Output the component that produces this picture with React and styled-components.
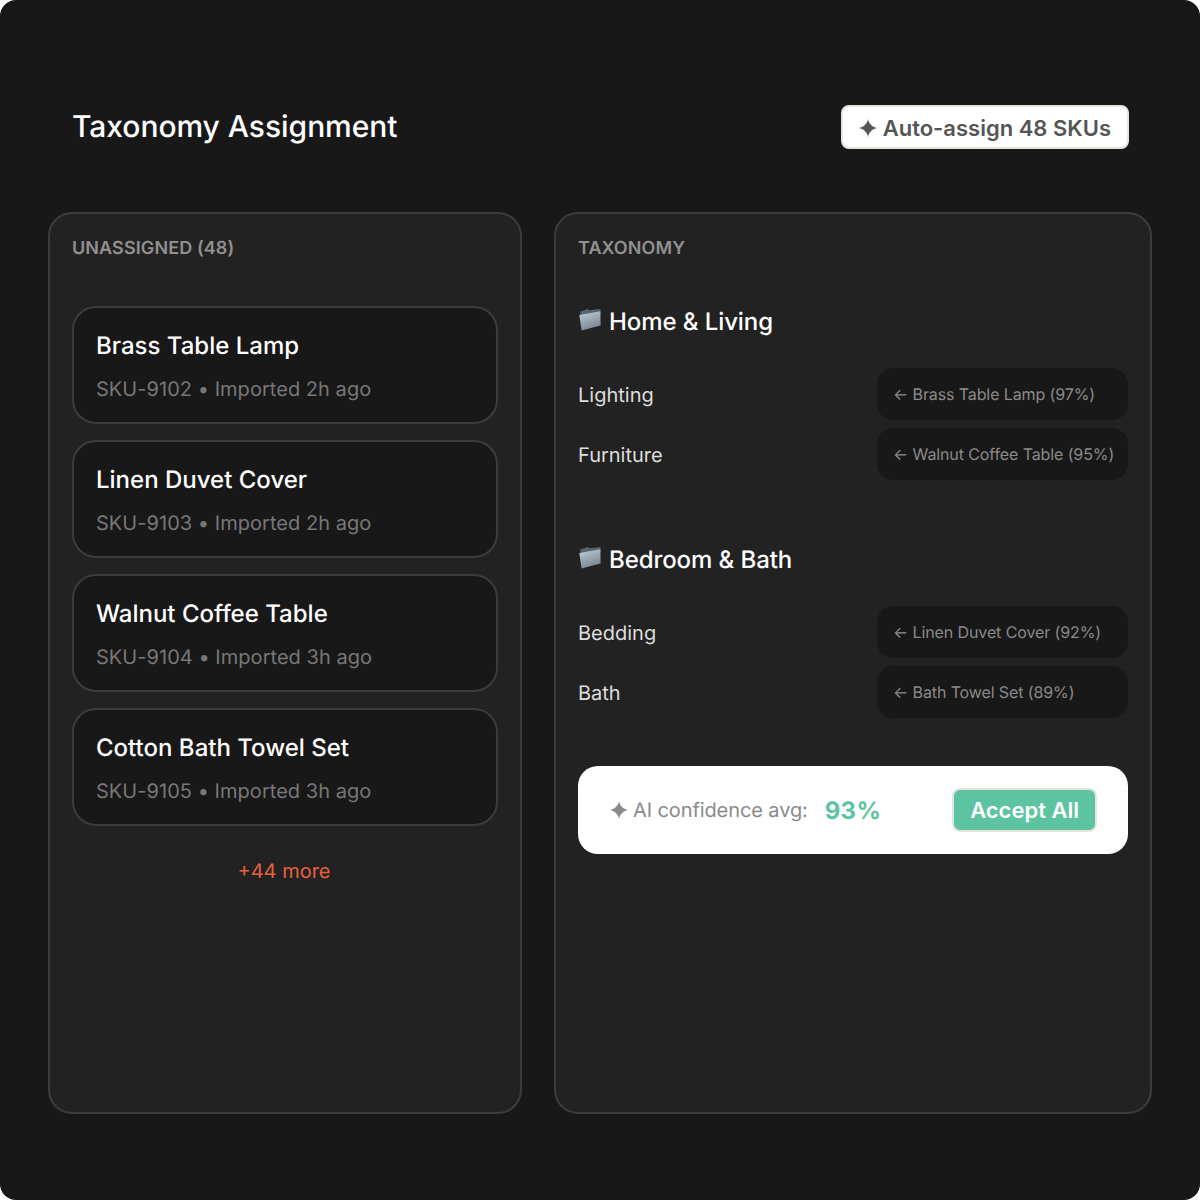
import styled, { createGlobalStyle } from 'styled-components';

const unassigned = [
  { name: 'Brass Table Lamp', meta: 'SKU-9102 • Imported 2h ago' },
  { name: 'Linen Duvet Cover', meta: 'SKU-9103 • Imported 2h ago' },
  { name: 'Walnut Coffee Table', meta: 'SKU-9104 • Imported 3h ago' },
  { name: 'Cotton Bath Towel Set', meta: 'SKU-9105 • Imported 3h ago' },
];

const groups = [
  {
    title: 'Home & Living',
    rows: [
      { label: 'Lighting', match: '← Brass Table Lamp (97%)' },
      { label: 'Furniture', match: '← Walnut Coffee Table (95%)' },
    ],
  },
  {
    title: 'Bedroom & Bath',
    rows: [
      { label: 'Bedding', match: '← Linen Duvet Cover (92%)' },
      { label: 'Bath', match: '← Bath Towel Set (89%)' },
    ],
  },
];

const FolderIcon = ({ id }) => (
  <svg width="24" height="24" viewBox="0 0 24 24" aria-hidden="true">
    <defs>
      <linearGradient id={id} x1="0" y1="0" x2="0.4" y2="1">
        <stop offset="0" stopColor="#c3ced8" />
        <stop offset="1" stopColor="#7a8894" />
      </linearGradient>
    </defs>
    <path d="M2 3.6 L10 1 L11 2.2 L22.4 1 L22.6 6 L3 9 Z" fill="#59636c" />
    <path d="M1.3 6.9 L22.4 3.3 L22.6 17.6 L3.6 22.4 Z" fill={`url(#${id})`} />
  </svg>
);

const Sparkle = () => (
  <svg width="18" height="18" viewBox="0 0 18 18" aria-hidden="true">
    <path
      d="M9 0 C9.8 4.5 13 8 18 9 C13 10 9.8 13.5 9 18 C8.2 13.5 5 10 0 9 C5 8 8.2 4.5 9 0Z"
      fill="currentColor"
    />
  </svg>
);

const App = () => {
  return (
    <>
      <GlobalStyle />
      <Page>
        <Header>
          <Title>Taxonomy Assignment</Title>
          <AutoButton>
            <Sparkle />
            Auto-assign 48 SKUs
          </AutoButton>
        </Header>
        <Columns>
          <Panel>
            <PanelLabel>Unassigned (48)</PanelLabel>
            <CardList>
              {unassigned.map((item) => (
                <Card key={item.name}>
                  <CardName>{item.name}</CardName>
                  <CardMeta>{item.meta}</CardMeta>
                </Card>
              ))}
            </CardList>
            <More>+44 more</More>
          </Panel>
          <Panel>
            <PanelLabel>Taxonomy</PanelLabel>
            {groups.map((group, index) => (
              <Group key={group.title}>
                <GroupTitle>
                  <FolderIcon id={`folder-${index}`} />
                  {group.title}
                </GroupTitle>
                <Rows>
                  {group.rows.map((row) => (
                    <Row key={row.label}>
                      <RowLabel>{row.label}</RowLabel>
                      <Match>{row.match}</Match>
                    </Row>
                  ))}
                </Rows>
              </Group>
            ))}
            <Summary>
              <SummaryText>
                <Sparkle />
                AI confidence avg:
              </SummaryText>
              <Score>93%</Score>
              <AcceptButton>Accept All</AcceptButton>
            </Summary>
          </Panel>
        </Columns>
      </Page>
    </>
  );
};

const GlobalStyle = createGlobalStyle`
  html, body {
    margin: 0;
    background: #ffffff;
  }

  * {
    box-sizing: border-box;
  }
`;

const Page = styled.div`
  width: 1200px;
  height: 1200px;
  padding: 0 48px;
  background: #191818;
  border-radius: 16px;
  font-family: Inter, 'Liberation Sans', sans-serif;
  text-rendering: geometricPrecision;
  overflow: hidden;
`;

const Header = styled.header`
  height: 212px;
  padding: 42px 23px 0 24px;
  display: flex;
  align-items: center;
  justify-content: space-between;
`;

const Title = styled.h1`
  margin: 0;
  font-size: 30px;
  font-weight: 500;
  letter-spacing: -0.05px;
  color: #ffffff;
`;

const AutoButton = styled.button`
  height: 44px;
  padding: 1px 16px 0;
  display: inline-flex;
  align-items: center;
  gap: 6px;
  font-family: inherit;
  font-size: 22px;
  font-weight: 600;
  color: #555555;
  background: #ffffff;
  border: 2px solid #e8e4dc;
  border-radius: 8px;
`;

const Columns = styled.div`
  display: grid;
  grid-template-columns: 474px 598px;
  gap: 32px;
`;

const Panel = styled.section`
  height: 902px;
  padding: 22px;
  background: #232222;
  border: 2px solid #3d3c3c;
  border-radius: 24px;
`;

const PanelLabel = styled.h2`
  margin: 2px 0 -2px;
  font-size: 18px;
  line-height: 22px;
  font-weight: 600;
  letter-spacing: 0.1px;
  text-transform: uppercase;
  color: #909090;
`;

const CardList = styled.div`
  margin-top: 48px;
  display: flex;
  flex-direction: column;
  gap: 16px;
`;

const Card = styled.article`
  height: 118px;
  padding: 23px 22px;
  background: #191818;
  border: 2px solid #3d3c3c;
  border-radius: 24px;
`;

const CardName = styled.div`
  font-size: 24px;
  line-height: 30px;
  font-weight: 500;
  color: #ffffff;
`;

const CardMeta = styled.div`
  margin-top: 16px;
  font-size: 20px;
  line-height: 24px;
  letter-spacing: 0.04px;
  color: #777777;
`;

const More = styled.div`
  margin-top: 33px;
  padding-right: 2px;
  font-size: 20px;
  line-height: 24px;
  text-align: center;
  color: #e8603c;
`;

const Group = styled.div`
  margin-top: 49px;

  & + & {
    margin-top: 65px;
  }
`;

const GroupTitle = styled.h3`
  margin: 0;
  display: flex;
  align-items: center;
  gap: 7px;
  font-size: 24px;
  line-height: 30px;
  font-weight: 500;
  letter-spacing: -0.08px;
  color: #ffffff;

  svg {
    margin-top: -4px;
  }
`;

const Rows = styled.div`
  margin-top: 31px;
  display: flex;
  flex-direction: column;
  gap: 8px;
`;

const Row = styled.div`
  display: flex;
  align-items: center;
  justify-content: space-between;
`;

const RowLabel = styled.span`
  padding-top: 2px;
  font-size: 20px;
  color: #dddddd;
`;

const Match = styled.span`
  width: 251px;
  height: 52px;
  padding: 0 16px;
  display: flex;
  align-items: center;
  font-size: 16px;
  letter-spacing: -0.11px;
  white-space: nowrap;
  color: #8a8a8a;
  background: #191818;
  border-radius: 16px;
`;

const Summary = styled.div`
  margin-top: 48px;
  height: 88px;
  padding: 0 31px 0 32px;
  display: flex;
  align-items: center;
  background: #ffffff;
  border-radius: 20px;
`;

const SummaryText = styled.span`
  display: inline-flex;
  align-items: center;
  gap: 5px;
  font-size: 20px;
  letter-spacing: -0.1px;
  color: #8a8a8a;
`;

const Score = styled.span`
  margin-left: 17px;
  font-size: 24px;
  font-weight: 700;
  letter-spacing: 0.3px;
  color: #5cc4a0;
`;

const AcceptButton = styled.button`
  margin-left: auto;
  height: 44px;
  padding: 0 16px;
  font-family: inherit;
  font-size: 22px;
  font-weight: 600;
  color: #ffffff;
  background: #5cc4a0;
  border: 2px solid #e8e4dc;
  border-radius: 8px;
`;

export default App;
